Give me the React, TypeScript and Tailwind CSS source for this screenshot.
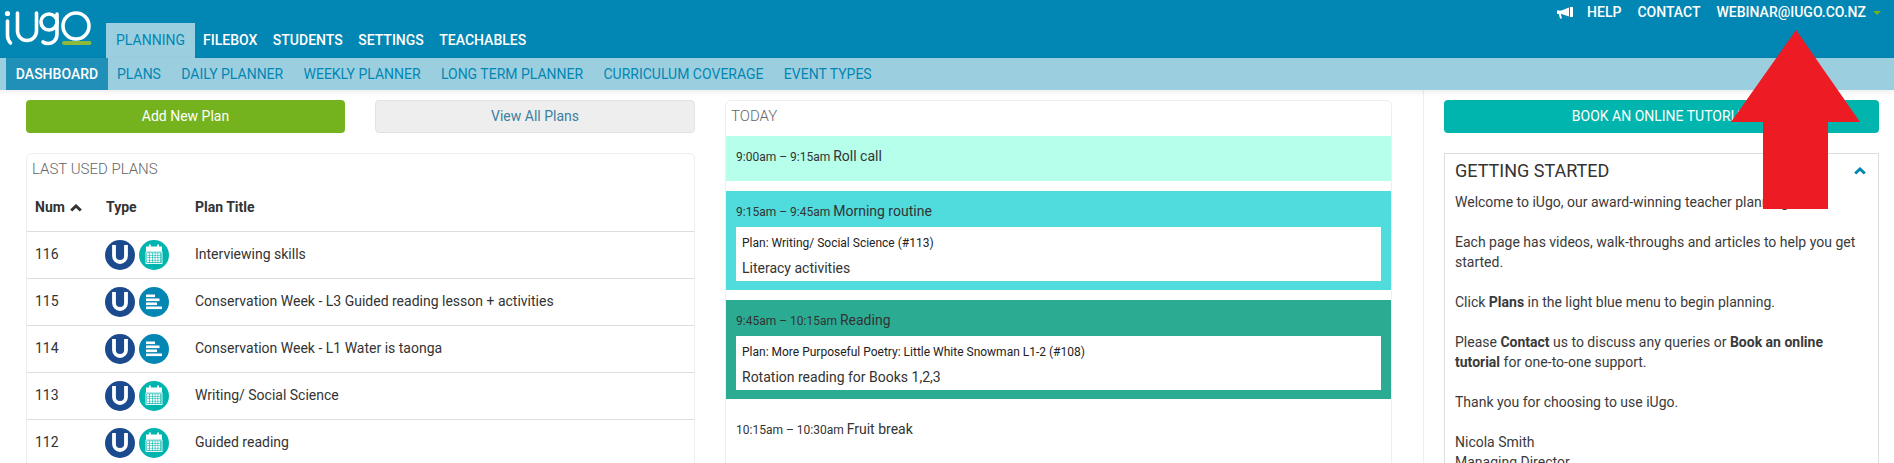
import React from 'react';

const topLinks = ['FILEBOX', 'STUDENTS', 'SETTINGS', 'TEACHABLES'];
const subLinks = ['PLANS', 'DAILY PLANNER', 'WEEKLY PLANNER', 'LONG TERM PLANNER', 'CURRICULUM COVERAGE', 'EVENT TYPES'];

const plans = [
  { num: 116, kind: 'calendar', title: 'Interviewing skills' },
  { num: 115, kind: 'align', title: 'Conservation Week - L3 Guided reading lesson + activities' },
  { num: 114, kind: 'align', title: 'Conservation Week - L1 Water is taonga' },
  { num: 113, kind: 'calendar', title: 'Writing/ Social Science' },
  { num: 112, kind: 'calendar', title: 'Guided reading' },
];

function Logo() {
  return (
    <svg width="96" height="50" viewBox="0 0 96 50" fill="none" className="shrink-0">
      <circle cx="7.5" cy="13.5" r="2.6" fill="#fff" />
      <path d="M7.5 21v14q0 5 3 8" stroke="#fff" strokeWidth="3.6" strokeLinecap="round" />
      <path d="M17.5 13v18a9.5 9.5 0 0 0 19 0V13" stroke="#fff" strokeWidth="3.6" strokeLinecap="round" />
      <circle cx="49" cy="22" r="8" stroke="#fff" strokeWidth="3.6" />
      <path d="M57 14v20c0 6-4 9.5-9 9.5q-3 0-5-1.5" stroke="#fff" strokeWidth="3.6" strokeLinecap="round" />
      <circle cx="76" cy="26" r="13" stroke="#fff" strokeWidth="3.6" />
      <path d="M64 43h25.500" stroke="#8fb93a" strokeWidth="4" strokeLinecap="round" />
    </svg>
  );
}

function UserBadge() {
  return (
    <svg width="30" height="30" viewBox="0 0 30 30">
      <circle cx="15" cy="15" r="15" fill="#1b4a8e" />
      <path d="M9 5v11a6 6 0 0 0 12 0V5" fill="none" stroke="#fff" strokeWidth="3.8" />
    </svg>
  );
}

function CalendarBadge() {
  const cells = [];
  for (let r = 0; r < 4; r++) {
    for (let c = 0; c < 5; c++) {
      cells.push(<rect key={`${r}-${c}`} x={8 + c * 2.8} y={13.2 + r * 2.4} width="2.2" height="1.9" fill="#fff" />);
    }
  }
  return (
    <svg width="30" height="30" viewBox="0 0 30 30">
      <circle cx="15" cy="15" r="15" fill="#00b5ad" />
      <rect x="7" y="6.500" width="16" height="5" fill="#fff" />
      <rect x="10" y="4.500" width="1.800" height="3" fill="#fff" />
      <rect x="18.200" y="4.500" width="1.800" height="3" fill="#fff" />
      <rect x="7" y="12" width="16" height="11.500" fill="none" stroke="#fff" strokeWidth="0.900" />
      {cells}
    </svg>
  );
}

function AlignBadge() {
  return (
    <svg width="30" height="30" viewBox="0 0 30 30">
      <circle cx="15" cy="15" r="15" fill="#0286b3" />
      <rect x="7" y="7.500" width="9" height="2.600" fill="#fff" />
      <rect x="7" y="11.500" width="13.500" height="2.600" fill="#fff" />
      <rect x="7" y="15.500" width="11" height="2.600" fill="#fff" />
      <rect x="7" y="19.500" width="16" height="2.600" fill="#fff" />
    </svg>
  );
}

function Bullhorn() {
  return (
    <svg width="16" height="12" viewBox="0 0 16 12" fill="#fff" className="-mr-[2px] mt-[1px]">
      <path d="M0 3.500h4.500L12 0.500v9L4.500 7H3.800L5 11.500H3L1.800 7H0z" />
      <rect x="13" y="0" width="3" height="10" />
    </svg>
  );
}

function Chevron({ className }: { className: string }) {
  return (
    <svg width="12" height="8" viewBox="0 0 12 8" fill="none" className={className}>
      <path d="M1.200 6.500 6 2l4.800 4.500" stroke="currentColor" strokeWidth="3" />
    </svg>
  );
}

function EventBlock({ time, title, plan, note, bg }: { time: string; title: string; plan?: string; note?: string; bg: string }) {
  return (
    <div className={`${bg} px-[10px] ${plan ? 'h-[99px] pt-[10px]' : 'h-[45px] pt-[10px]'} mb-[10px]`}>
      <div className="text-[12px] leading-[20px] text-[#333]">
        {time} <span className="text-[14px]">{title}</span>
      </div>
      {plan && (
        <div className="mt-[5px] h-[54px] bg-white px-[6px] pt-[6px]">
          <div className="text-[12px] leading-[20px] text-[#222]">{plan}</div>
          <div className="mt-[5px] text-[14px] leading-[20px] text-[#333]">{note}</div>
        </div>
      )}
    </div>
  );
}

export default function App() {
  return (
    <div className="relative h-screen w-full overflow-hidden bg-white font-['Roboto',sans-serif] text-[14px] text-[#333]">
      <header className="relative h-[58px] bg-[#0286b3]">
        <div className="flex h-full items-end">
          <div className="mb-[8px] w-[106px]">
            <Logo />
          </div>
          <nav className="flex h-[35px] items-stretch font-medium text-white">
            <a className="flex w-[89px] items-center justify-center bg-[#9bcfdf] pb-[1px] font-normal text-[#0286b3]">PLANNING</a>
            <div className="ml-[8px] flex items-center gap-[15.500px] pb-[1px]">
              {topLinks.map(link => (
                <a key={link}>{link}</a>
              ))}
            </div>
          </nav>
        </div>
        <div className="absolute right-[13px] top-[4px] flex h-[17px] items-center gap-[16px] font-medium text-white">
          <Bullhorn />
          <a>HELP</a>
          <a>CONTACT</a>
          <a className="flex items-center gap-[7px]">
            WEBINAR@IUGO.CO.NZ
            <span className="h-0 w-0 border-x-[4px] border-t-[4px] border-x-transparent border-t-[#74b21e]" />
          </a>
        </div>
      </header>

      <div className="relative z-10 flex h-[32px] items-stretch bg-[#9bcfdf] pl-[6px] text-[#0286b3] shadow-[0_2px_6px_rgba(0,0,0,0.08)]">
        <a className="mr-[9px] flex w-[102px] items-center justify-center bg-[#2090b8] font-medium text-white">DASHBOARD</a>
        <div className="flex items-center gap-[20.300px]">
          {subLinks.map(link => (
            <a key={link}>{link}</a>
          ))}
        </div>
      </div>

      <main className="flex">
        <div className="flex w-[1424px] shrink-0 gap-[30px] border-r border-[#eee] pl-[26px] pt-[10px]">
          <section className="w-[669px] shrink-0">
            <div className="flex gap-[30px]">
              <button className="h-[33px] w-[319px] rounded-[4px] bg-[#74b21e] text-white">Add New Plan</button>
              <button className="h-[33px] w-[320px] rounded-[4px] border border-[#e2e2e2] bg-[#eee] text-[#3d7fa0]">View All Plans</button>
            </div>
            <div className="mt-[20px] h-[400px] rounded-[6px] border border-[#eee]">
              <div className="px-[5px] pt-[5px] text-[15px] font-light leading-[20px] text-[#666]">LAST USED PLANS</div>
              <table className="mt-[6px] w-full border-collapse text-left">
                <thead>
                  <tr className="h-[46px] border-b border-[#ddd] font-bold">
                    <th className="w-[78px] pl-[8px]">
                      <span className="flex items-center gap-[5px]">
                        Num <Chevron className="text-[#333]" />
                      </span>
                    </th>
                    <th className="w-[90px] pl-[1px]">Type</th>
                    <th>Plan Title</th>
                  </tr>
                </thead>
                <tbody>
                  {plans.map(plan => (
                    <tr key={plan.num} className="h-[47px] border-b border-[#ddd]">
                      <td className="pl-[8px]">{plan.num}</td>
                      <td>
                        <div className="flex gap-[4px]">
                          <UserBadge />
                          {plan.kind === 'calendar' ? <CalendarBadge /> : <AlignBadge />}
                        </div>
                      </td>
                      <td>{plan.title}</td>
                    </tr>
                  ))}
                </tbody>
              </table>
            </div>
          </section>

          <section className="h-[400px] w-[667px] shrink-0 rounded-[6px] border border-[#eee]">
            <div className="h-[35px] px-[5px] pt-[5px] text-[15px] font-light leading-[20px] text-[#666]">TODAY</div>
            <EventBlock bg="bg-[#b5ffeb]" time="9:00am – 9:15am" title="Roll call" />
            <EventBlock bg="bg-[#50dbdd]" time="9:15am – 9:45am" title="Morning routine" plan="Plan: Writing/ Social Science (#113)" note="Literacy activities" />
            <EventBlock bg="bg-[#2cab93]" time="9:45am – 10:15am" title="Reading" plan="Plan: More Purposeful Poetry: Little White Snowman L1-2 (#108)" note="Rotation reading for Books 1,2,3" />
            <EventBlock bg="bg-white" time="10:15am – 10:30am" title="Fruit break" />
          </section>
        </div>

        <aside className="ml-[20px] w-[435px] shrink-0 pt-[10px]">
          <button className="h-[33px] w-full rounded-[4px] bg-[#00b5ad] text-white">BOOK AN ONLINE TUTORIAL</button>
          <div className="mt-[20px] h-[400px] border border-[#ddd] px-[10px] pt-[4px]">
            <div className="flex items-center justify-between pr-[2px]">
              <h2 className="text-[18px] font-normal leading-[25px] text-[#333]">GETTING STARTED</h2>
              <Chevron className="text-[#0286b3]" />
            </div>
            <div className="mt-[9px] leading-[20px] text-[#3a3a3a]">
              <p>Welcome to iUgo, our award-winning teacher planning tool.</p>
              <p className="mt-[20px]">Each page has videos, walk-throughs and articles to help you get started.</p>
              <p className="mt-[20px]">Click <b>Plans</b> in the light blue menu to begin planning.</p>
              <p className="mt-[20px]">Please <b>Contact</b> us to discuss any queries or <b>Book an online tutorial</b> for one-to-one support.</p>
              <p className="mt-[20px]">Thank you for choosing to use iUgo.</p>
              <p className="mt-[20px]">Nicola Smith<br />Managing Director</p>
            </div>
          </div>
        </aside>
      </main>

      <svg className="absolute left-[1731px] top-[30px] z-20" width="129" height="179" viewBox="0 0 129 179">
        <path d="M65 0 129 92H97V179H32V92H0Z" fill="#ed1c24" />
      </svg>
    </div>
  );
}
